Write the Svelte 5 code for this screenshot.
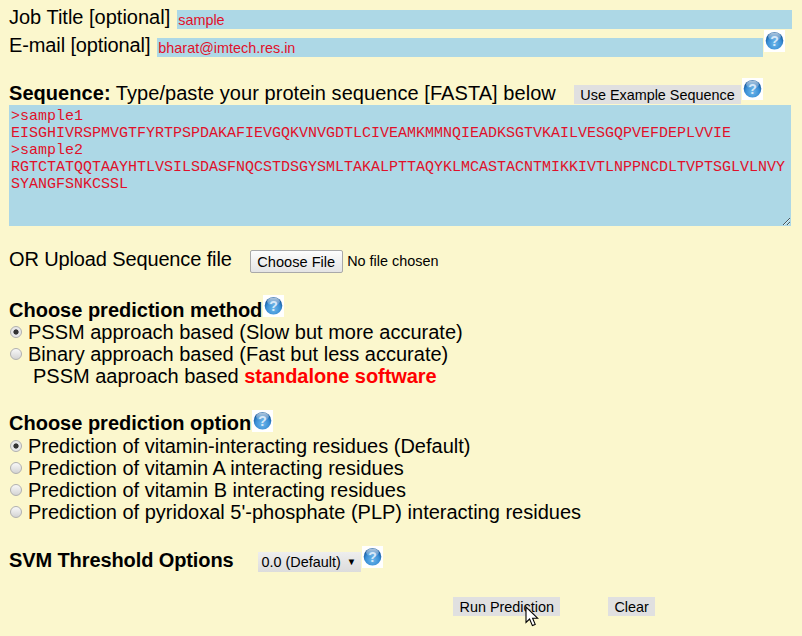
<script>
  const seq = `>sample1
EISGHIVRSPMVGTFYRTPSPDAKAFIEVGQKVNVGDTLCIVEAMKMMNQIEADKSGTVKAILVESGQPVEFDEPLVVIE
>sample2
RGTCTATQQTAAYHTLVSILSDASFNQCSTDSGYSMLTAKALPTTAQYKLMCASTACNTMIKKIVTLNPPNCDLTVPTSGLVLNVYSYANGFSNKCSSL`;
  const methods = [
    ['PSSM approach based (Slow but more accurate)', true],
    ['Binary approach based (Fast but less accurate)', false]
  ];
  const options = [
    ['Prediction of vitamin-interacting residues (Default)', true],
    ['Prediction of vitamin A interacting residues', false],
    ['Prediction of vitamin B interacting residues', false],
    ["Prediction of pyridoxal 5'-phosphate (PLP) interacting residues", false]
  ];
</script>

{#snippet help()}
  <svg class="help" width="21" height="22" viewBox="0 0 21 22" aria-hidden="true">
    <defs>
      <radialGradient id="hg" cx="50%" cy="68%" r="60%">
        <stop offset="0" stop-color="#6db8ea" />
        <stop offset="0.65" stop-color="#3a8fd6" />
        <stop offset="1" stop-color="#145a9f" />
      </radialGradient>
      <linearGradient id="hs" x1="0" y1="0" x2="0" y2="1">
        <stop offset="0" stop-color="#fff" stop-opacity="0.7" />
        <stop offset="1" stop-color="#fff" stop-opacity="0.05" />
      </linearGradient>
    </defs>
    <rect width="21" height="22" fill="#fff" />
    <circle cx="10.5" cy="10.8" r="8.8" fill="url(#hg)" />
    <ellipse cx="10.5" cy="6.6" rx="6.4" ry="4.2" fill="url(#hs)" />
    <text x="10.5" y="16" text-anchor="middle" class="q">?</text>
  </svg>
{/snippet}

<form class="page">
  <div class="row r-job">
    <label for="job">Job Title [optional]</label>
    <input id="job" class="field job" value="sample" />
  </div>
  <div class="row r-mail">
    <label for="mail">E-mail [optional]</label>
    <input id="mail" class="field mail" value="bharat@imtech.res.in" />
    {@render help()}
  </div>

  <div class="row r-seq">
    <span class="seq-label"><b>Sequence:</b> Type/paste your protein sequence [FASTA] below</span>
    <button type="button" class="gray example">Use Example Sequence</button>
    {@render help()}
  </div>
  <textarea class="seq" spellcheck="false" value={seq}></textarea>

  <div class="row r-upload">
    <span class="upload-label">OR Upload Sequence file</span>
    <button type="button" class="file">Choose File</button>
    <span class="nofile">No file chosen</span>
  </div>

  <div class="head r-h1"><b>Choose prediction method</b>{@render help()}</div>
  {#each methods as [text, on]}
    <div class="opt"><span class="radio" class:on></span>{text}</div>
  {/each}
  <div class="soft">PSSM aaproach based <a href="#top">standalone software</a></div>

  <div class="head r-h2"><b>Choose prediction option</b>{@render help()}</div>
  {#each options as [text, on]}
    <div class="opt"><span class="radio" class:on></span>{text}</div>
  {/each}

  <div class="row r-svm">
    <b class="svm-label">SVM Threshold Options</b>
    <span class="select">0.0 (Default)<i>▼</i></span>
    {@render help()}
  </div>

  <div class="actions">
    <span class="cursor-wrap">
      <button type="button" class="gray run">Run Prediction</button>
      <svg class="cursor" width="15" height="21" viewBox="0 0 15 21" aria-hidden="true">
        <path d="M1 1 L1 16.5 L4.6 13 L7.4 19.6 L10.2 18.4 L7.6 12.2 L12.6 12.2 Z" fill="#fff" stroke="#000" stroke-width="1.1" />
      </svg>
    </span>
    <button type="button" class="gray clear">Clear</button>
  </div>
</form>

<style>
  :global(body) {
    margin: 0;
    background: #fbf7cd;
  }
  .page {
    height: 636px;
    box-sizing: border-box;
    padding: 6px 0 0 9px;
    overflow: hidden;
    font-family: "Liberation Sans", Arial, sans-serif;
    font-size: 20px;
    line-height: 22px;
    color: #000;
  }
  .row {
    display: flex;
    align-items: flex-start;
  }
  .field {
    box-sizing: border-box;
    height: 19px;
    border: 0;
    padding: 0 1px;
    background: #add8e6;
    color: #e0102a;
    font: 14.4px "Liberation Sans", Arial, sans-serif;
    outline: none;
  }
  .job { width: 615px; margin: 4px 0 0 7px; }
  .mail { width: 606px; margin: 4px 0 0 7px; }
  .r-mail { margin-top: 5px; height: 24px; letter-spacing: -0.12px; }
  .r-mail .help { margin: -4px 0 0 1px; }
  .r-seq { margin-top: 24px; height: 23px; }
  .seq-label { letter-spacing: 0.05px; }
  .r-seq .example { margin: 3px 0 0 18px; padding: 0 6.5px; }
  .r-seq .help { margin: -4px 0 0 1px; }
  .gray {
    display: block;
    height: 19px;
    border: 0;
    padding: 0 6px;
    background: #e0e0e0;
    color: #000;
    font: 14.4px "Liberation Sans", Arial, sans-serif;
  }
  .run { padding: 0 6.5px; }
  .seq {
    display: block;
    box-sizing: border-box;
    width: 782px;
    height: 121px;
    margin: 0;
    border: 0;
    padding: 3px 2px 2px;
    background: #add8e6;
    color: #e0102a;
    font: 15px/17px "Liberation Mono", "Courier New", monospace;
    outline: none;
  }
  .r-upload { margin-top: 22px; height: 26px; }
  .upload-label { letter-spacing: -0.13px; }
  .file {
    box-sizing: border-box;
    width: 93px;
    height: 23px;
    margin: 2px 0 0 18px;
    padding: 0;
    border: 1px solid #a9a9a9;
    border-radius: 2px;
    background: linear-gradient(#fdfdfd, #e4e4e4);
    color: #000;
    font: 14.6px "Liberation Sans", Arial, sans-serif;
  }
  .nofile {
    margin: 2px 0 0 4.5px;
    font-size: 14.4px;
    line-height: 23px;
  }
  .head {
    display: flex;
    align-items: flex-start;
    height: 22px;
  }
  .head .help { margin: -4px 0 0 1px; }
  .r-h1 { margin-top: 25px; }
  .r-h2 { margin-top: 25px; height: 23px; }
  .r-h2 .help { margin-top: -2px; }
  .opt {
    display: flex;
    align-items: center;
    height: 22px;
  }
  .radio {
    box-sizing: border-box;
    width: 12px;
    height: 12px;
    margin: 0 6.5px 0 0.5px;
    border: 1px solid #b0b0b0;
    border-radius: 50%;
    background: linear-gradient(#f8f8f8, #d4d4d4);
  }
  .radio.on {
    background: radial-gradient(circle, #333 0 2.2px, #e8e8e8 3px);
  }
  .soft {
    height: 22px;
    padding-left: 24px;
  }
  .soft a {
    color: #f00;
    font-weight: bold;
    text-decoration: none;
    letter-spacing: -0.05px;
  }
  .r-svm { margin-top: 26px; height: 24px; }
  .svm-label { letter-spacing: -0.1px; }
  .select {
    box-sizing: border-box;
    width: 103px;
    height: 20px;
    margin: 3px 0 0 24px;
    padding: 0 4px;
    display: inline-flex;
    align-items: center;
    background: linear-gradient(#eeeeee, #dcdcdc);
    font-size: 14.4px;
    line-height: 20px;
  }
  .select i {
    margin-left: 6px;
    font-style: normal;
    font-size: 9.5px;
  }
  .r-svm .help { margin: -3px 0 0 1px; }
  .actions {
    display: flex;
    margin: 24px 0 0 444px;
    gap: 48px;
  }
  .cursor-wrap {
    position: relative;
    display: block;
    height: 19px;
  }
  .cursor {
    position: absolute;
    left: 72px;
    top: 9px;
  }
  .help { flex: none; display: block; }
  .q {
    fill: #d6e8f8;
    font: bold 14px "Liberation Sans", Arial, sans-serif;
  }
</style>
